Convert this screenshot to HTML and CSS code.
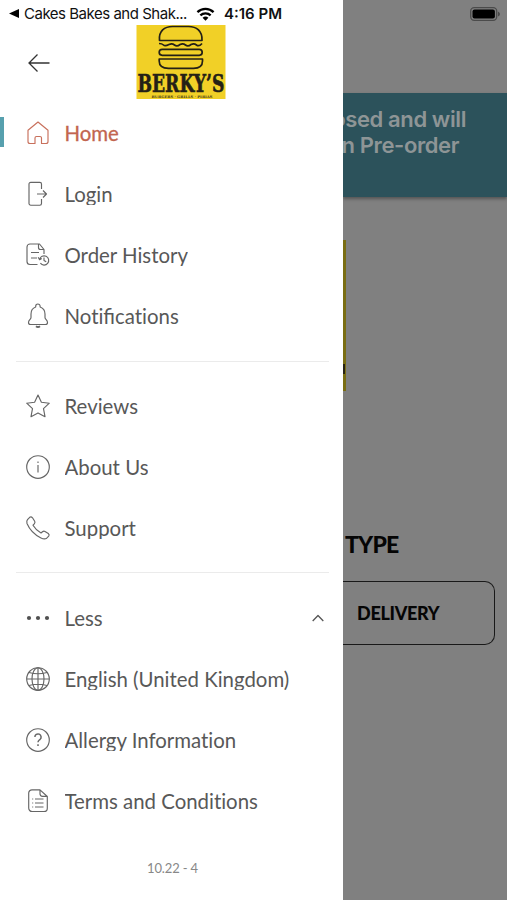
FILE: index.html
```html
<!DOCTYPE html>
<html lang="en">
<head>
<meta charset="utf-8">
<title>Berky's menu</title>
<link rel="stylesheet" href="styles.css">
</head>
<body>
<div class="screen">
  <aside class="drawer">
    <div class="status">
      <svg class="caret" viewBox="0 0 10 9"><path d="M0 4.5L10 0V9Z"/></svg>
      <span class="return">Cakes Bakes and Shak...</span>
      <svg class="wifi" viewBox="0 0 20 14"><path d="M1.500 5A12.200 12.200 0 0 1 18.500 5M4.600 8.500A7.800 7.800 0 0 1 15.400 8.500" fill="none" stroke="#000" stroke-width="2.400"/><path d="M6.900 10.900a4.800 4.800 0 0 1 6.200 0L10 14Z"/></svg>
      <span class="time">4:16 PM</span>
    </div>
    <header class="head">
      <svg class="back" viewBox="0 0 22 18"><path d="M21.500 9H1M9.500 .5L1 9l8.500 8.500"/></svg>
      <svg class="logo" viewBox="0 0 89 74">
        <rect width="89" height="74" fill="#f1d027"/>
        <g fill="none" stroke="#242016" stroke-width="1.700" stroke-linejoin="round">
          <path d="M23 15.500C22 6 28 1.500 36 1.500H52C60 1.500 66 6 65.500 15.500Z"/>
          <path d="M22.500 18.500q3 0 4.500 1.500t5.500-.5q3-1.500 5.500 .5t5.500-.5q3-1.500 5.500 .5t5.500-.5q3-1.500 5.500 .5t5.500-1.500"/>
          <rect x="22.700" y="24.300" width="43" height="6" rx="3"/>
          <path d="M22.700 34H66V36Q66 43.300 57 43.300H32Q22.700 43.300 22.700 36Z"/>
        </g>
        <text class="brand" x="1" y="67" textLength="87" lengthAdjust="spacingAndGlyphs">BERKY’S</text>
        <text class="tag" x="15" y="73" textLength="61" lengthAdjust="spacingAndGlyphs">BURGERS · GRILLS · PIRIAS</text>
      </svg>
    </header>
    <nav>
      <ul class="group">
        <li class="item active"><svg viewBox="0 0 24 24"><path d="M2 9.300L12 1l10 8.300V20.500a2 2 0 0 1-2 2h-4.500V17a1.500 1.500 0 0 0-1.500-1.500h-3.500A1.500 1.500 0 0 0 9 17v5.500H4a2 2 0 0 1-2-2Z"/></svg><span>Home</span></li>
        <li class="item"><svg viewBox="0 0 24 24"><path d="M15.500 7V2a1.700 1.700 0 0 0-1.700-1.700H4.700A1.700 1.700 0 0 0 3 2v19.500a1.700 1.700 0 0 0 1.700 1.700h9.100A1.700 1.700 0 0 0 15.500 21.500V17M11 12h9.500M17 8.500L20.500 12l-3.500 3.500"/></svg><span>Login</span></li>
        <li class="item"><svg viewBox="0 0 24 24"><path d="M11.500 21.500H4a3 3 0 0 1-3-3V4a3 3 0 0 1 3-3h9.500L18 6.500V11M12.500 1v3.500a2 2 0 0 0 2 2H18M5 9.500h8M5 15h6"/><path d="M13.600 16.500a4.600 4.600 0 1 1 .8 3.700M18 14.500v3l2.200 1.300M12.200 14.300l1.400 2.400 2.200-1.200"/></svg><span>Order History</span></li>
        <li class="item"><svg viewBox="0 0 24 24"><path d="M9.700 3V2.200a2.200 2.200 0 0 1 4.400 0V3C17 4 19 6.300 19 10v3.500c0 2 2.500 2.500 2.500 5 0 1.300-1 2-2 2h-15c-1 0-2-.7-2-2 0-2.500 2.500-3 2.500-5V10c0-3.700 1.800-6 4.700-7Z"/><path d="M10 22.300q2 1.500 4 0" stroke-width="2"/></svg><span>Noti<i>fi</i>cations</span></li>
      </ul>
      <ul class="group second">
        <li class="item"><svg viewBox="0 0 24 24"><path d="M12 1l3.400 7.200 7.900 1-5.800 5.500 1.500 8L12 18.900l-7 3.800 1.500-8L.7 9.200l7.900-1Z"/></svg><span>Reviews</span></li>
        <li class="item"><svg viewBox="0 0 24 24"><circle cx="12" cy="12" r="11.300"/><path d="M12 10v7.500M12 6.500v1.600"/></svg><span>About Us</span></li>
        <li class="item"><svg viewBox="0 0 24 24"><path d="M1.500 3.700L3.700 1.300q1.500-1 2.800.5l2.200 3.500q.7 1.300-.4 2.500L7 9.200q3 5 8 7.800l1.500-1.300q1.200-1 2.500-.3l3.300 2.100q1.500 1.200.4 2.700l-2 2Q18.500 23.700 15 22 5 17 1 7.500.4 5 1.500 3.700Z"/></svg><span>Support</span></li>
      </ul>
      <ul class="group third">
        <li class="item"><svg viewBox="0 0 24 24"><g fill="#505050" stroke="none"><circle cx="3" cy="12" r="2.100"/><circle cx="12" cy="12" r="2.100"/><circle cx="21" cy="12" r="2.100"/></g></svg><span>Less</span><svg class="chev" viewBox="0 0 12 8"><path d="M.7 7L6 1.500 11.300 7"/></svg></li>
        <li class="item"><svg viewBox="0 0 24 24"><circle cx="12" cy="12" r="11.300"/><ellipse cx="12" cy="12" rx="6" ry="11.300"/><path d="M12 .7v22.600M.7 12h22.600M3 5.500q9 2.500 18 0M3 18.500q9-2.500 18 0"/></svg><span>English (United Kingdom)</span></li>
        <li class="item"><svg viewBox="0 0 24 24"><circle cx="12" cy="12" r="11.300"/><path stroke-width="1.500" d="M8.900 9a3.100 3.100 0 1 1 5.200 2.300c-1.200 1-2.100 1.400-2.100 3M12 16.300V18"/></svg><span>Allergy Information</span></li>
        <li class="item"><svg viewBox="0 0 24 24"><path d="M14 .8H6a3.300 3.300 0 0 0-3.300 3.300v15A3.300 3.300 0 0 0 6 22.500h12a3.300 3.300 0 0 0 3.300-3.300V7.500ZM14 1v3.800a2.500 2.500 0 0 0 2.500 2.500h4.500M9 10h8.500M9 14h8.500M9 18h8.500M6.200 10h1M6.200 14h1M6.200 18h1"/></svg><span>Terms and Conditions</span></li>
      </ul>
    </nav>
    <footer>10.22 - 4</footer>
  </aside>
  <main class="page">
    <div class="topbar"><svg class="battery" viewBox="0 0 30 14"><rect x=".7" y=".7" width="26" height="12.600" rx="3.500" fill="none" stroke="#4b4b4b" stroke-width="1.300"/><rect x="2.500" y="2.500" width="22.400" height="9" rx="2"/><path d="M28 4.500q2 1 2 2.500t-2 2.500Z" fill="#4b4b4b"/></svg></div>
    <div class="notice"><p>osed and will</p><p class="line2">n Pre-order</p></div>
    <div class="banner"></div>
    <h2>TYPE</h2>
    <div class="option">DELIVERY</div>
  </main>
</div>
</body>
</html>
```

FILE: styles.css
```css
* { box-sizing: border-box; margin: 0; padding: 0; }
body { font-family: Lato, sans-serif; color: #585858; background: #fff; }
.screen { display: grid; grid-template-columns: 343px 164px; height: 900px; overflow: hidden; }
.drawer { background: #fff; display: flex; flex-direction: column; overflow: hidden; }
.status { height: 25px; padding: 2px 0 0 9px; display: flex; align-items: center; font-family: Inter, sans-serif; color: #111; white-space: nowrap; }
.caret { width: 10px; height: 9px; margin-right: 5px; }
.return { width: 163px; font-size: 15px; letter-spacing: -0.48px; }
.wifi { width: 19px; height: 14px; margin: 0 9px 0 9px; }
.time { font-size: 15px; font-weight: 600; }
.head { height: 77px; display: flex; align-items: flex-start; }
.back { width: 22px; height: 18px; margin: 29px 86px 0 28px; fill: none; stroke: #333; stroke-width: 1.3; }
.logo { width: 90px; height: 74px; display: block; }
.brand { font: bold 23.500px "DejaVu Serif", serif; fill: #242016; stroke: #242016; stroke-width: .6; }
.tag { font: bold 3.600px "DejaVu Serif", serif; fill: #4b421a; }
.group { list-style: none; }
.item { height: 61px; display: flex; align-items: center; padding-left: 25.500px; font-size: 20.4px; font-variant-ligatures: none; }
.item i { font-style: normal; font-variant-ligatures: normal; }
.item svg { width: 24px; height: 24px; flex: none; fill: none; stroke: #666; stroke-width: 1.15; stroke-linejoin: round; margin-right: 15px; overflow: visible; }
.item span { height: 23px; line-height: 25px; overflow: hidden; white-space: nowrap; }
.item.active { color: #c26550; background: linear-gradient(#57a0ae, #57a0ae) 0 15px / 4px 30px no-repeat; }
.item.active svg { stroke: #c8705c; }
.item.active span { -webkit-text-stroke: .3px #c26550; }
.second, .third { margin: 0 14px 0 16px; border-top: 1px solid #ebebeb; }
.second { margin-top: 15px; padding-top: 13px; }
.third { margin-top: 14px; padding-top: 14px; }
.second .item, .third .item { padding-left: 9.500px; }
.item .chev { width: 12px; height: 8px; margin: 0 5px 0 auto; stroke: #555; stroke-width: 1.3; }
footer { margin-top: 28px; padding-left: 2px; text-align: center; font-size: 13px; line-height: 18px; letter-spacing: -0.15px; color: #888; }
.page { background: #808080; overflow: hidden; color: #050505; display: flex; flex-direction: column; }
.topbar { height: 93px; flex: none; padding: 7px 7px 0 0; }
.battery { display: block; width: 30px; height: 14px; margin-left: auto; }
.notice { height: 104px; flex: none; padding: 13px 41px 0 0; background: #2c525b; color: #8e9596; box-shadow: 0 2px 3px #555; font: 600 22px/26px Inter, sans-serif; letter-spacing: -0.4px; white-space: nowrap; display: flex; flex-direction: column; align-items: flex-end; }
.line2 { margin-right: 7px; }
.banner { width: 3px; height: 151px; flex: none; margin-top: 43px; background: linear-gradient(#282315, #282315) 0 124px / 2px 10px no-repeat, #796d12; }
h2 { margin-top: 139px; padding-left: 2px; font-size: 23px; line-height: 28px; font-weight: 900; letter-spacing: -0.8px; }
.option { height: 64px; width: 152px; margin-top: 23px; padding-left: 14px; border: 1.5px solid #191919; border-left: 0; border-radius: 0 10px 10px 0; font-size: 18px; font-weight: 900; line-height: 62px; letter-spacing: -0.3px; }
```
